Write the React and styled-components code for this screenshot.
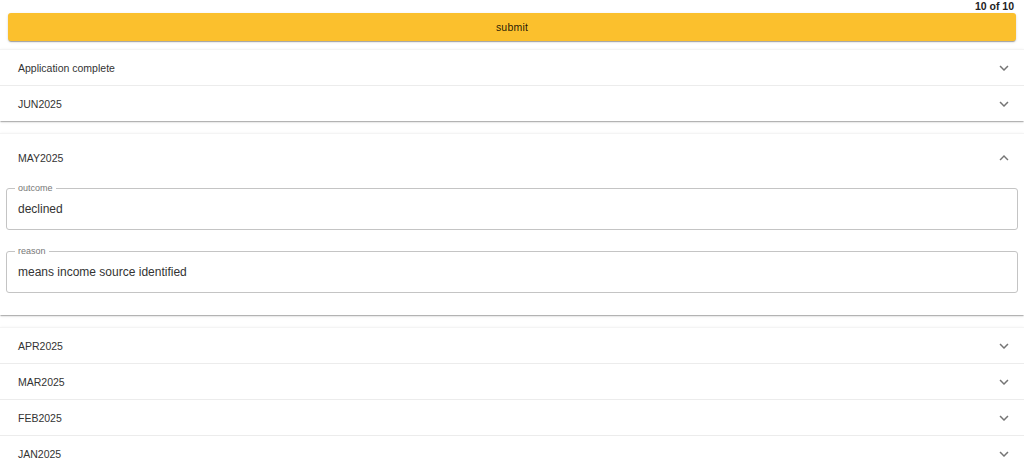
import React from "react";
import styled, { createGlobalStyle } from "styled-components";

const Global = createGlobalStyle`
  html, body { margin: 0; padding: 0; background: #fff; }
  body { font-family: "Liberation Sans", Arial, sans-serif; color: rgba(0,0,0,0.87); }
  * { box-sizing: border-box; }
`;

const Page = styled.div`
  width: 1024px;
  display: flex;
  flex-direction: column;
`;

const TopBar = styled.div`
  display: flex;
  flex-direction: column;
  padding: 0 8px;
`;

const Counter = styled.div`
  align-self: flex-end;
  font-size: 10.5px;
  font-weight: bold;
  line-height: 13px;
  padding-right: 2px;
  color: #222;
`;

const SubmitButton = styled.button`
  height: 28px;
  border: none;
  border-radius: 3px;
  background: #fbc02d;
  color: rgba(0,0,0,0.87);
  font-family: inherit;
  font-size: 10.5px;
  letter-spacing: 0.2px;
  box-shadow: 0 2px 1px -1px rgba(0,0,0,0.2), 0 1px 1px 0 rgba(0,0,0,0.14), 0 1px 3px 0 rgba(0,0,0,0.12);
  cursor: pointer;
`;

const Group = styled.div`
  display: flex;
  flex-direction: column;
  background: #fff;
  margin-top: ${(p) => p.$top}px;
  box-shadow: 0 2px 1px -1px rgba(0,0,0,0.16), 0 1px 1px 0 rgba(0,0,0,0.1), 0 1px 3px 0 rgba(0,0,0,0.1);
`;

const Item = styled.div`
  display: flex;
  flex-direction: column;
  border-top: 1px solid ${(p) => (p.$first ? "#f4f4f4" : "#ececec")};
`;

const Summary = styled.div`
  display: flex;
  align-items: center;
  justify-content: space-between;
  height: ${(p) => (p.$open ? 48 : 35)}px;
  padding: 0 11px 0 18px;
  font-size: 10.5px;
  color: #333;
`;

const Details = styled.div`
  display: flex;
  flex-direction: column;
  gap: 21px;
  padding: 6px 6px 22px 6px;
`;

const Field = styled.div`
  position: relative;
  height: 42px;
  border: 1px solid #c4c4c4;
  border-radius: 3px;
  display: flex;
  align-items: center;
  padding: 0 11px;
  font-size: 12px;
  color: #333;
`;

const FieldLabel = styled.span`
  position: absolute;
  top: -6px;
  left: 8px;
  padding: 0 3px;
  background: #fff;
  font-size: 9px;
  line-height: 10px;
  color: #777;
`;

const Chevron = ({ up }) => (
  <svg width="18" height="18" viewBox="0 0 24 24" fill="#757575">
    {up ? (
      <path d="m12 8-6 6 1.41 1.41L12 10.83l4.59 4.58L18 14z" />
    ) : (
      <path d="M16.59 8.59 12 13.17 7.41 8.59 6 10l6 6 6-6z" />
    )}
  </svg>
);

const Row = ({ title, first }) => (
  <Item $first={first}>
    <Summary>
      <span>{title}</span>
      <Chevron />
    </Summary>
  </Item>
);

export default function App() {
  return (
    <Page>
      <Global />
      <TopBar>
        <Counter>10 of 10</Counter>
        <SubmitButton>submit</SubmitButton>
      </TopBar>
      <Group $top={8}>
        <Row title="Application complete" first />
        <Row title="JUN2025" />
      </Group>
      <Group $top={12}>
        <Item $first>
          <Summary $open>
            <span>MAY2025</span>
            <Chevron up />
          </Summary>
          <Details>
            <Field>
              <FieldLabel>outcome</FieldLabel>
              declined
            </Field>
            <Field>
              <FieldLabel>reason</FieldLabel>
              means income source identified
            </Field>
          </Details>
        </Item>
      </Group>
      <Group $top={12}>
        <Row title="APR2025" first />
        <Row title="MAR2025" />
        <Row title="FEB2025" />
        <Row title="JAN2025" />
      </Group>
    </Page>
  );
}
